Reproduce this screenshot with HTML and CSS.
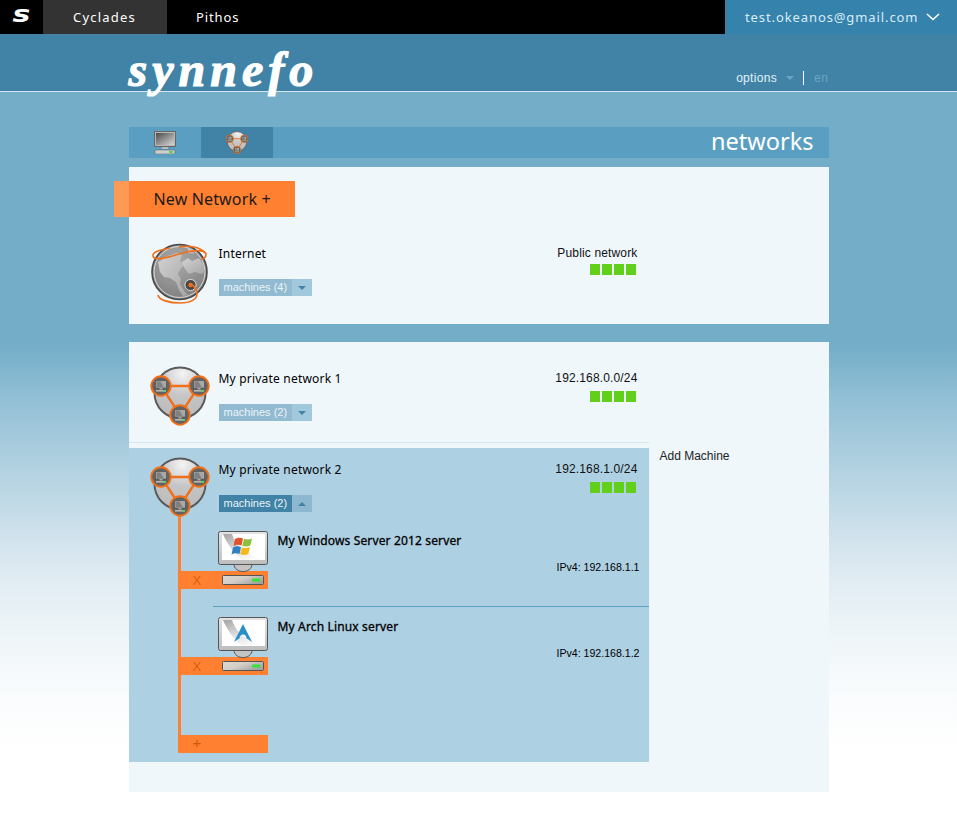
FILE: index.html
```html
<!DOCTYPE html>
<html lang="en">
<head>
  <meta charset="UTF-8">
  <title>synnefo - networks</title>
  <link rel="stylesheet" href="styles.css">
</head>
<body>

  <!-- shared drawings -->
  <svg class="sprite" xmlns="http://www.w3.org/2000/svg">
    <defs>
      <linearGradient id="frame-grad" x1="0" y1="0" x2="0" y2="1">
        <stop offset="0" stop-color="#e4e4e4"/>
        <stop offset="1" stop-color="#bdbdbd"/>
      </linearGradient>
      <linearGradient id="sheen-grad" x1="0" y1="0" x2="0.6" y2="1">
        <stop offset="0" stop-color="#a4a4a4"/>
        <stop offset="0.6" stop-color="#e2e2e2"/>
        <stop offset="1" stop-color="#fbfbfb"/>
      </linearGradient>
      <linearGradient id="server-grad" x1="0" y1="0" x2="1" y2="0.6">
        <stop offset="0" stop-color="#e0d8d1"/>
        <stop offset="0.5" stop-color="#d4cec8"/>
        <stop offset="1" stop-color="#a2a2a2"/>
      </linearGradient>
      <radialGradient id="ball-grad" cx="0.55" cy="0.12" r="0.85">
        <stop offset="0" stop-color="#f4f4f4"/>
        <stop offset="0.5" stop-color="#c6c6c6"/>
        <stop offset="1" stop-color="#bcbcbc"/>
      </radialGradient>
      <radialGradient id="globe-grad" cx="0.45" cy="0.3" r="0.8">
        <stop offset="0" stop-color="#a8a8a8"/>
        <stop offset="1" stop-color="#7c7c7c"/>
      </radialGradient>
      <linearGradient id="land-grad" x1="0" y1="0" x2="1" y2="1">
        <stop offset="0" stop-color="#d2d2d2"/>
        <stop offset="1" stop-color="#a6a6a6"/>
      </linearGradient>
      <linearGradient id="tab-screen" x1="0" y1="0" x2="1" y2="1">
        <stop offset="0" stop-color="#4a4a4a"/>
        <stop offset="1" stop-color="#d8d8d8"/>
      </linearGradient>

      <symbol id="monitor" viewBox="0 0 50 41">
        <path d="M16 33c0 10 18 10 18 0z" fill="#c4c4c4" stroke="#555"/>
        <rect x=".5" y=".5" width="49" height="33" rx="2" fill="url(#frame-grad)" stroke="#555"/>
        <rect x="4" y="3" width="43" height="26" fill="#fff"/>
        <path d="M5 3h9c4 12 13 21 33 26H24C16 22 9 13 5 3z" fill="url(#sheen-grad)"/>
      </symbol>

      <symbol id="server" viewBox="0 0 42 10">
        <rect x=".5" y=".5" width="41" height="9" rx="1" fill="url(#server-grad)" stroke="#555"/>
        <rect x="30" y="3.5" width="8" height="3" fill="#36e436"/>
      </symbol>

      <symbol id="node" viewBox="0 0 22 22">
        <circle cx="11" cy="11" r="9.700" fill="#626262" stroke="#f0701a" stroke-width="2"/>
        <rect x="5.500" y="5.500" width="11" height="7.500" fill="#a8a8a8" stroke="#4c4c4c" stroke-width=".6"/>
        <path d="M6.500 6.500h4l3 5.500h-7z" fill="#808080"/>
        <rect x="9.500" y="13" width="3" height="1.400" fill="#aaa"/>
        <rect x="6" y="15" width="10" height="1.600" fill="#b8b8b8"/>
        <rect x="13" y="15" width="3" height="1.600" fill="#59d659"/>
      </symbol>

      <symbol id="net" viewBox="0 0 62 62">
        <circle cx="31" cy="27" r="25.500" fill="url(#ball-grad)" stroke="#5a5a5a" stroke-width="2"/>
        <path d="M12 20h38L31 49z" fill="none" stroke="#f0701a" stroke-width="2.400"/>
        <use href="#node" x="1" y="9" width="22" height="22"/>
        <use href="#node" x="39" y="9" width="22" height="22"/>
        <use href="#node" x="20" y="38" width="22" height="22"/>
      </symbol>

      <symbol id="globe" viewBox="0 0 62 64">
        <circle cx="30.500" cy="31" r="27.500" fill="url(#globe-grad)" stroke="#484848" stroke-width="1.600"/>
        <circle cx="30.500" cy="31" r="25.500" fill="none" stroke="#d8d8d8" stroke-width="1"/>
        <path d="M9 21l10-6 9-3 5 2-2 6 5 4-4 3-3 6 3 5-1 5 5 8 3 3-5 1-4-6-3-8-6-4-6-1-4-5z" fill="url(#land-grad)"/>
        <path d="M33 21l6-4 4 3 7-3 4 6 2 8-4 2-6-2-6 2-4-5z" fill="url(#land-grad)"/>
        <path d="M39 8l7 2-2 3-5-1z" fill="url(#land-grad)"/>
        <circle cx="41.500" cy="44" r="5.600" fill="#4a4a4a" stroke="#dcdcdc" stroke-width="1"/>
        <circle cx="41.500" cy="44" r="2.200" fill="#f0701a"/>
        <path d="M21 7C11 9 3 11 4 15c1 5 14 2 26-2 12-4 26-5 27 0 0 3-2 5-5 5" fill="none" stroke="#f0701a" stroke-width="1.600"/>
        <path d="M30 6c10-2 22 0 26 6" fill="none" stroke="#f0701a" stroke-width="1.600"/>
        <path d="M9 54c1 5 11 8 22 8s17-4 17-9c0-5-3-8-6-10" fill="none" stroke="#f0701a" stroke-width="1.600"/>
      </symbol>
    </defs>
  </svg>

  <div class="topbar">
    <a class="topbar-logo">s</a>
    <a class="topbar-item active">Cyclades</a>
    <a class="topbar-item pithos">Pithos</a>
    <a class="topbar-user">
      <span>test.okeanos@gmail.com</span>
      <svg class="chevron" width="14" height="8" viewBox="0 0 14 8"><path d="M1 1l6 5.500L13 1" fill="none" stroke="#fff" stroke-width="1.600"/></svg>
    </a>
  </div>

  <div class="header">
    <div class="header-inner">
      <div class="brand">synnefo</div>
      <div class="header-options">
        <span class="options">options</span>
        <span class="arrow-down muted"></span>
        <span class="lang-sep"></span>
        <span class="lang">en</span>
      </div>
    </div>
  </div>

  <div class="main">
    <div class="tabs">
      <a class="tab">
        <svg width="22" height="23" viewBox="0 0 22 23">
          <rect x=".5" y=".5" width="21" height="15" fill="#b8b8b8" stroke="#666"/>
          <rect x="2" y="2" width="18" height="12" fill="url(#tab-screen)"/>
          <rect x="8" y="16" width="6" height="2" fill="#bbb"/>
          <rect x="1" y="19" width="20" height="4" rx="1" fill="#cfcfcf" stroke="#666" stroke-width=".6"/>
          <rect x="15" y="20" width="4" height="2" fill="#59d659"/>
        </svg>
      </a>
      <a class="tab active"><svg width="24" height="24"><use href="#net"/></svg></a>
      <div class="tabs-title">networks</div>
    </div>

    <div class="panel panel-public">
      <a class="new-network">New Network +</a>

      <div class="net-row public">
        <svg class="net-icon" width="62" height="64"><use href="#globe"/></svg>
        <div class="net-info">
          <div class="net-name">Internet</div>
          <div class="machines-toggle">
            <span class="toggle-label">machines (4)</span>
            <span class="toggle-arrow"><i class="arrow-down"></i></span>
          </div>
        </div>
        <div class="net-meta">
          <div class="net-subnet">Public network</div>
          <div class="bars"><i></i><i></i><i></i><i></i></div>
        </div>
      </div>
    </div>

    <div class="panel panel-private">
      <div class="net-row row-sep">
        <svg class="net-icon" width="62" height="62"><use href="#net"/></svg>
        <div class="net-info">
          <div class="net-name">My private network 1</div>
          <div class="machines-toggle">
            <span class="toggle-label">machines (2)</span>
            <span class="toggle-arrow"><i class="arrow-down"></i></span>
          </div>
        </div>
        <div class="net-meta">
          <div class="net-subnet">192.168.0.0/24</div>
          <div class="bars"><i></i><i></i><i></i><i></i></div>
        </div>
      </div>

      <div class="open-wrap">
        <div class="net-open">
          <div class="net-row open">
            <svg class="net-icon" width="62" height="62"><use href="#net"/></svg>
            <div class="net-info">
              <div class="net-name">My private network 2</div>
              <div class="machines-toggle open">
                <span class="toggle-label">machines (2)</span>
                <span class="toggle-arrow"><i class="arrow-up"></i></span>
              </div>
            </div>
            <div class="net-meta">
              <div class="net-subnet">192.168.1.0/24</div>
              <div class="bars"><i></i><i></i><i></i><i></i></div>
            </div>
          </div>

          <div class="machines">
            <div class="machine">
              <div class="thumb">
                <svg class="screen" width="50" height="41" viewBox="0 0 50 41">
                  <use href="#monitor" width="50" height="41"/>
                  <path d="M17 8c3-1.500 5-1.500 8-.5l-1.500 7c-3-1-5-1-8 .5z" fill="#e2512a"/>
                  <path d="M26 7.800c3 1 5 1 8-.3l-1.700 7c-3 1.300-5 1.300-8 .3z" fill="#8dbf3c"/>
                  <path d="M15 16.500c3-1.500 5-1.500 8-.5l-1.500 7c-3-1-5-1-8 .5z" fill="#2f80c4"/>
                  <path d="M24 16.300c3 1 5 1 8-.3l-1.700 7c-3 1.300-5 1.300-8 .3z" fill="#f5b91c"/>
                </svg>
                <div class="thumb-bar">
                  <span class="thumb-action">X</span>
                  <svg width="42" height="10"><use href="#server"/></svg>
                </div>
              </div>
              <div class="machine-info">
                <div class="machine-name">My Windows Server 2012 server</div>
                <div class="machine-ip">IPv4: 192.168.1.1</div>
              </div>
            </div>

            <div class="machine-sep"></div>

            <div class="machine">
              <div class="thumb">
                <svg class="screen" width="50" height="41" viewBox="0 0 50 41">
                  <use href="#monitor" width="50" height="41"/>
                  <path d="M25 7c3 6 6 12 9 18-2-1.500-4-3-5.500-3.500 .2-2-1.500-4-3.500-4s-3.700 2-3.500 4C20 22 18 23.500 16 25c3-6 6-12 9-18z" fill="#2a8fc9"/>
                </svg>
                <div class="thumb-bar">
                  <span class="thumb-action">X</span>
                  <svg width="42" height="10"><use href="#server"/></svg>
                </div>
              </div>
              <div class="machine-info">
                <div class="machine-name">My Arch Linux server</div>
                <div class="machine-ip">IPv4: 192.168.1.2</div>
              </div>
            </div>
          </div>

          <div class="add-bar"><span class="thumb-action add">+</span></div>
        </div>

        <div class="net-actions">Add Machine</div>
      </div>
    </div>
  </div>

</body>
</html>
```

FILE: styles.css
```css
body {
  margin: 0;
  min-height: 820px;
  font-family: "Noto Sans", sans-serif;
  font-size: 12px;
  color: #000;
  background: linear-gradient(to bottom, #74adc8 345px, #93c0d6 400px, #c0d9e6 500px, #dde9f1 567px, #eef5f8 633px, #fafcfd 700px, #fff 750px);
}

.sprite {
  display: block;
  width: 0;
  height: 0;
}

/* top black bar */
.topbar {
  display: flex;
  height: 34px;
  background-color: #000;
  color: #fff;
}

.topbar-logo {
  width: 43px;
  text-align: center;
  font-family: "DejaVu Sans", sans-serif;
  font-weight: bold;
  font-style: italic;
  font-size: 23px;
  line-height: 29px;
  transform: scaleX(1.3);
}

.topbar-item {
  padding: 0 30px;
  font-size: 13px;
  line-height: 34px;
  letter-spacing: 1.2px;
}

.topbar-item.active {
  padding-right: 31px;
  background-color: #333;
}

.topbar-item.pithos {
  padding-left: 29px;
  letter-spacing: .9px;
}

.topbar-user {
  display: flex;
  align-items: center;
  gap: 8px;
  box-sizing: border-box;
  width: 232px;
  margin-left: auto;
  padding-left: 20px;
  background-color: #3582ad;
  color: #d8ecf6;
  font-size: 13px;
  letter-spacing: .9px;
}

/* header with logo */
.header {
  height: 57px;
  background-color: #4083a6;
  border-bottom: 1px solid #d3e5ef;
}

.header-inner {
  display: flex;
  justify-content: space-between;
  width: 700px;
  height: 57px;
  margin: 0 auto;
}

.brand {
  font-family: "Liberation Serif", serif;
  font-weight: bold;
  font-style: italic;
  font-size: 48px;
  line-height: 72px;
  letter-spacing: 5px;
  color: #fff;
  -webkit-text-stroke: 1.2px #fff;
}

.header-options {
  display: flex;
  align-items: center;
  gap: 9px;
  height: 16px;
  margin-top: 36px;
  font-family: "Liberation Sans", sans-serif;
  color: #e4f1f8;
}

.options {
  letter-spacing: .3px;
}

.lang-sep {
  width: 1px;
  height: 14px;
  background-color: #fff;
}

.lang {
  margin-left: 1px;
  letter-spacing: .6px;
  color: #6fa5c2;
}

.arrow-down,
.arrow-up {
  display: block;
  width: 0;
  height: 0;
  border-left: 4px solid transparent;
  border-right: 4px solid transparent;
}

.arrow-down {
  border-top: 4px solid #4083a6;
}

.arrow-up {
  border-bottom: 4px solid #4083a6;
}

.arrow-down.muted {
  border-top-color: #6fa5c2;
}

/* main column */
.main {
  width: 700px;
  margin: 35px auto 0;
}

.tabs {
  display: flex;
  height: 31px;
  background-color: #5a9fc2;
}

.tab {
  display: flex;
  justify-content: center;
  align-items: center;
  width: 72px;
}

.tab.active {
  background-color: #4083a6;
}

.tabs-title {
  margin-left: auto;
  padding-right: 15px;
  font-size: 23.500px;
  line-height: 28px;
  color: #fff;
}

.panel {
  background-color: #eff7fb;
}

.panel-public {
  margin-top: 9px;
  padding: 14px 0 5px;
}

.panel-private {
  margin-top: 18px;
  padding-bottom: 30px;
}

.new-network {
  display: block;
  width: 141px;
  height: 36px;
  margin: 0 0 2px -15px;
  padding-left: 25px;
  background-color: #ff8030;
  border-left: 15px solid #ff9a56;
  font-size: 16px;
  line-height: 36px;
  letter-spacing: .15px;
  color: #1a1a1a;
}

/* network rows */
.net-row {
  display: flex;
  box-sizing: border-box;
  width: 520px;
  height: 100px;
  padding: 24px 11px 0 20px;
}

.net-row.public {
  padding-top: 22px;
}

.net-row.public .bars {
  margin-top: -1px;
}

.net-row.row-sep {
  height: 101px;
  border-bottom: 1px solid #d4e8f3;
  margin-bottom: 5px;
}

.net-row.open {
  height: auto;
  padding-top: 9px;
}

.net-icon {
  display: block;
  flex: none;
  margin-right: 8px;
}

.net-row.open .net-icon {
  margin-bottom: -7px;
}

.net-name {
  height: 24px;
  margin-bottom: 14px;
  line-height: 26px;
  letter-spacing: .2px;
}

.machines-toggle {
  display: flex;
  width: 93px;
  height: 17px;
  font-family: "Liberation Sans", sans-serif;
  font-size: 11px;
  line-height: 17px;
  color: #eaf4f9;
}

.toggle-label {
  width: 73px;
  text-indent: 5px;
  background-color: #92bad1;
}

.toggle-arrow {
  display: flex;
  flex: 1;
  justify-content: center;
  align-items: center;
  background-color: #a2c8dc;
}

.machines-toggle.open .toggle-label {
  background-color: #4083a6;
}

.machines-toggle.open .toggle-arrow {
  background-color: #8db8cf;
}

.net-meta {
  margin-left: auto;
  font-family: "Liberation Sans", sans-serif;
  text-align: right;
}

.net-subnet {
  line-height: 24px;
  letter-spacing: .15px;
  color: #111;
}

.bars {
  display: flex;
  justify-content: flex-end;
  gap: 2px;
  margin: 1px 2px 0 0;
}

.bars i {
  width: 10px;
  height: 11px;
  background-color: #62d01a;
}

/* opened network */
.open-wrap {
  display: flex;
}

.net-open {
  width: 520px;
  padding-bottom: 9px;
  background-color: #aed0e3;
}

.net-actions {
  padding-left: 11px;
  font-family: "Liberation Sans", sans-serif;
  line-height: 16px;
  color: #222;
}

.machines {
  margin: 4px 0 0 49px;
  padding: 15px 0 60px;
  border-left: 3px solid #ff8030;
}

.machine {
  display: flex;
}

.machine-sep {
  margin: 17px 0 10px 32px;
  border-top: 1px solid #5a9fc2;
}

.thumb {
  display: flex;
  flex-direction: column;
  align-items: flex-end;
  width: 87px;
}

.screen {
  display: block;
  position: relative;
  margin-bottom: -1px;
}

.thumb-bar {
  display: flex;
  align-items: center;
  justify-content: space-between;
  box-sizing: border-box;
  width: 87px;
  height: 18px;
  padding: 0 4px 0 12px;
  background-color: #ff8030;
}

.thumb-action {
  font-family: "Liberation Sans", sans-serif;
  font-size: 13px;
  color: #d85f12;
}

.thumb-action.add {
  font-size: 15px;
  color: #c85a10;
}

.machine-info {
  flex: 1;
  padding: 0 9px 0 10px;
}

.machine-name {
  line-height: 20px;
  letter-spacing: .15px;
  -webkit-text-stroke: .3px #000;
}

.machine-ip {
  margin-top: 7px;
  font-family: "Liberation Sans", sans-serif;
  font-size: 10.600px;
  line-height: 18px;
  text-align: right;
}

.add-bar {
  box-sizing: border-box;
  width: 90px;
  height: 18px;
  margin-left: 49px;
  padding-left: 15px;
  background-color: #ff8030;
  line-height: 15px;
}
```
